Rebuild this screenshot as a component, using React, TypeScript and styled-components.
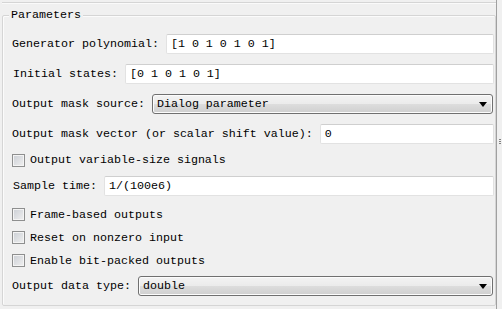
import React from "react";
import styled, { createGlobalStyle } from "styled-components";

const GlobalStyle = createGlobalStyle`
  html, body {
    margin: 0;
    padding: 0;
    background: #f0f0f0;
  }
  body {
    font-family: "Liberation Mono", "DejaVu Sans Mono", monospace;
    font-size: 11.667px;
    color: #000;
  }
`;

const Window = styled.div`
  width: 502px;
  height: 309px;
  display: flex;
  overflow: hidden;
  background: #f0f0f0;
`;

const Main = styled.div`
  flex: 1;
  display: flex;
  flex-direction: column;
`;

const TopEdge = styled.div`
  height: 2px;
  margin-left: 2px;
  border-bottom: 1px solid #d5d5d5;
  box-shadow: 0 1px 0 #fafafa;
`;

const GroupBox = styled.div`
  position: relative;
  margin: 12px 0 0 2px;
  height: 291px;
  box-sizing: border-box;
  border: 1px solid #d5d5d5;
  border-radius: 2px;
  box-shadow: inset 1px 1px 0 #fbfbfb;
  padding: 18px 1px 0 9px;
  display: flex;
  flex-direction: column;
`;

const Legend = styled.span`
  position: absolute;
  top: -8px;
  left: 6px;
  padding: 0 2px;
  background: #f0f0f0;
  line-height: 15px;
`;

const Row = styled.div<{ $h?: number; $mt?: number; $ml?: number }>`
  display: flex;
  align-items: center;
  height: ${({ $h }) => $h ?? 20}px;
  margin-top: ${({ $mt }) => $mt ?? 0}px;
  padding-left: ${({ $ml }) => $ml ?? 0}px;
  flex-shrink: 0;
`;

const Label = styled.span`
  white-space: pre;
  line-height: 20px;
`;

const Field = styled.div`
  flex: 1;
  height: 20px;
  box-sizing: border-box;
  background: #fff;
  border: 1px solid #e2e2e2;
  border-top-color: #cfcfcf;
  border-radius: 2px;
  padding-left: 4px;
  line-height: 18px;
  white-space: pre;
`;

const Select = styled.div`
  flex: 1;
  margin-right: 1px;
  height: 20px;
  box-sizing: border-box;
  border: 1px solid #707070;
  border-radius: 3px;
  background: linear-gradient(#f3f3f3 0%, #ebebeb 50%, #dddddd 51%, #cfcfcf 100%);
  box-shadow: inset 0 0 0 1px #fcfcfc;
  display: flex;
  align-items: center;
  justify-content: space-between;
  padding: 0 5px 0 4px;
  line-height: 18px;
`;

const Check = styled.span`
  width: 11px;
  height: 11px;
  border: 1px solid #8e8f8f;
  background: linear-gradient(135deg, #cbcfd5 0%, #f0f0f0 100%);
  box-shadow: inset 0 0 0 1px #f4f4f4;
  margin-right: 5px;
  flex-shrink: 0;
`;

const Splitter = styled.div`
  width: 6px;
  display: flex;
  align-items: flex-start;
  justify-content: flex-end;
  border-left: 1px solid #a0a0a0;
  box-sizing: border-box;
`;

const Grip = styled.svg`
  margin-top: 139px;
`;

const Arrow = () => (
  <svg width="8" height="5" viewBox="0 0 8 5">
    <polygon points="0,0 8,0 4,5" fill="#000" />
  </svg>
);

const TextRow = ({ label, value, mt }: { label: string; value: string; mt?: number }) => (
  <Row $mt={mt}>
    <Label>{label}</Label>
    <Field>{value}</Field>
  </Row>
);

const CheckRow = ({ label, h, mt }: { label: string; h: number; mt?: number }) => (
  <Row $h={h} $mt={mt}>
    <Check />
    <Label>{label}</Label>
  </Row>
);

const App = () => {
  return (
    <Window>
      <GlobalStyle />
      <Main>
        <TopEdge />
        <GroupBox>
          <Legend>Parameters</Legend>
          <TextRow label="Generator polynomial: " value="[1 0 1 0 1 0 1]" />
          <Row $mt={10} $ml={1}>
            <Label>Initial states: </Label>
            <Field>[0 1 0 1 0 1]</Field>
          </Row>
          <Row $mt={10}>
            <Label>Output mask source: </Label>
            <Select>
              <span>Dialog parameter</span>
              <Arrow />
            </Select>
          </Row>
          <TextRow mt={10} label="Output mask vector (or scalar shift value): " value="0" />
          <CheckRow h={32} label="Output variable-size signals" />
          <Row $ml={1}>
            <Label>Sample time: </Label>
            <Field>1/(100e6)</Field>
          </Row>
          <CheckRow h={23} mt={7} label="Frame-based outputs" />
          <CheckRow h={23} label="Reset on nonzero input" />
          <CheckRow h={23} label="Enable bit-packed outputs" />
          <Row $mt={4}>
            <Label>Output data type: </Label>
            <Select>
              <span>double</span>
              <Arrow />
            </Select>
          </Row>
        </GroupBox>
      </Main>
      <Splitter>
        <Grip width="3" height="6" viewBox="0 0 3 6">
          <rect x="0" y="0" width="2" height="1" fill="#808080" />
          <rect x="0" y="2" width="2" height="1" fill="#808080" />
          <rect x="0" y="4" width="2" height="1" fill="#808080" />
        </Grip>
      </Splitter>
    </Window>
  );
};

export default App;
